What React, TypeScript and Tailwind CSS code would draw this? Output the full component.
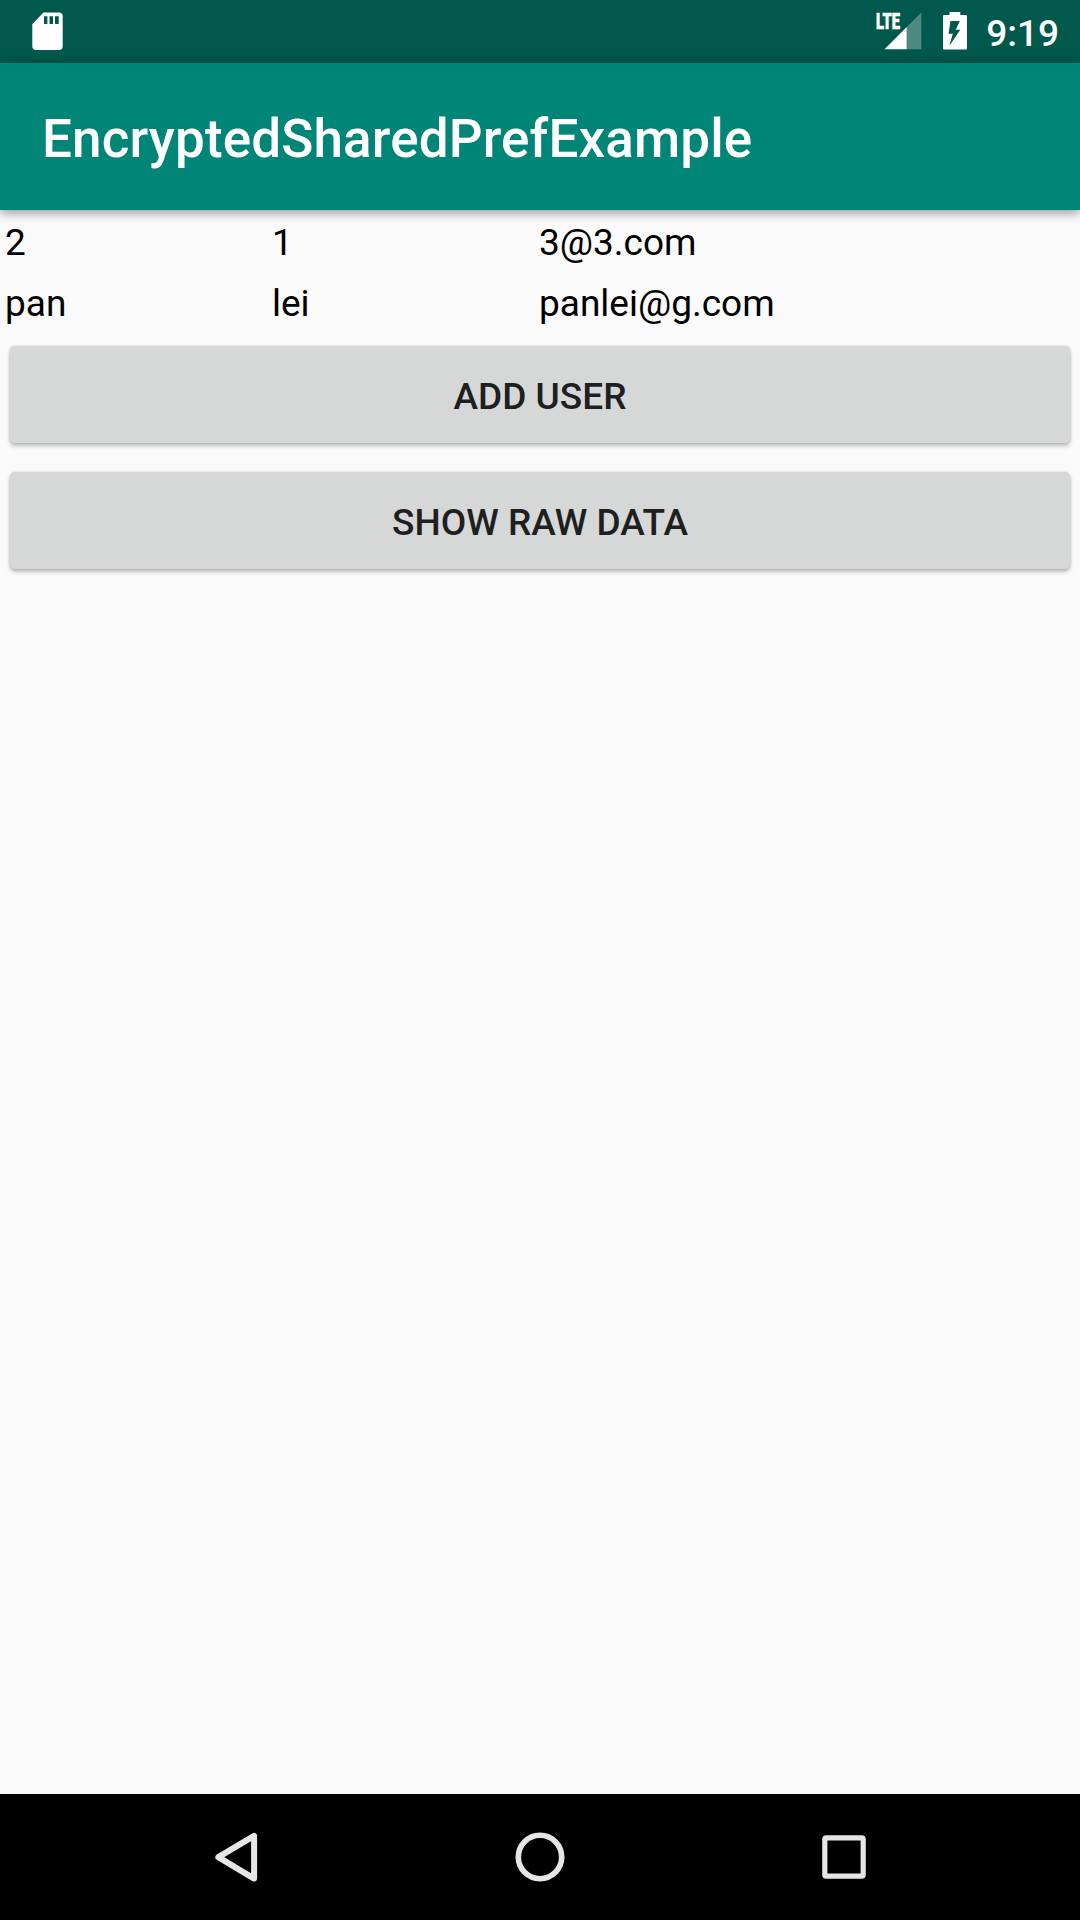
const users = [
  { first: "2", last: "1", email: "3@3.com" },
  { first: "pan", last: "lei", email: "panlei@g.com" },
];

function SdCardIcon() {
  return (
    <svg width="31" height="39" viewBox="0 0 31 39" className="block">
      <path
        fill="#fff"
        fillRule="evenodd"
        d="M11.5 0.5H27A3.7 3.7 0 0 1 30.7 4.2V34.3A3.7 3.7 0 0 1 27 38H4A3.7 3.7 0 0 1 0.3 34.3V12ZM12 4.2V12H15.4V4.2ZM17.5 4.2V12H21V4.2ZM23 4.2V12H26.7V4.2Z"
      />
    </svg>
  );
}

function SignalIcon() {
  return (
    <div className="relative h-[38px] w-[46px]">
      <svg width="46" height="38" viewBox="0 0 46 38" className="block">
        <path fill="#fff" fillOpacity="0.3" d="M30.7 15V37.3H45.3V0.5Z" />
        <path fill="#fff" d="M8.5 37.3L30.7 15V37.3Z" />
      </svg>
      <span className="absolute left-0 top-[-3px] origin-left scale-x-[0.65] text-[22.5px] font-black leading-[24px] text-white [-webkit-text-stroke:0.7px_#fff]">
        LTE
      </span>
    </div>
  );
}

function BatteryIcon() {
  return (
    <svg width="24" height="38" viewBox="0 0 24 38" className="block">
      <path
        fill="#fff"
        fillRule="evenodd"
        d="M6.5 0H17.3V3H22.8Q24 3 24 4.2V36.3Q24 37.5 22.8 37.5H1.2Q0 37.5 0 36.3V4.2Q0 3 1.2 3H6.5ZM7.5 9L5.5 21.7H9.8L6.3 34L17.3 17.7H12.8L16.7 9Z"
      />
    </svg>
  );
}

function RaisedButton({ label }: { label: string }) {
  return (
    <button className="h-[97px] w-full rounded-[5px] bg-[#d6d8d7] pt-[3px] text-[37px] font-medium leading-[43px] text-[#1e1f1f] shadow-[0_3px_4px_rgba(0,0,0,0.24),0_0_3px_rgba(0,0,0,0.14)]">
      {label}
    </button>
  );
}

export default function App() {
  return (
    <div className="flex h-[1920px] w-[1080px] flex-col overflow-hidden bg-[#fafafa] font-['Roboto',sans-serif]">
      <div className="flex h-[63px] shrink-0 items-start bg-[#00574b]">
        <div className="pl-8 pt-3">
          <SdCardIcon />
        </div>
        <div className="ml-auto flex items-start pr-[21px] pt-3">
          <SignalIcon />
          <div className="ml-[21px]">
            <BatteryIcon />
          </div>
          <span className="ml-[19px] text-[37px] font-medium leading-[43px] text-white">9:19</span>
        </div>
      </div>

      <header className="z-10 flex h-[147px] shrink-0 items-center bg-[#008577] px-[42px] shadow-[0_3px_10px_rgba(0,0,0,0.4)]">
        <h1 className="pt-1 text-[53px] font-medium leading-[62px] tracking-[0.14px] text-white">
          EncryptedSharedPrefExample
        </h1>
      </header>

      <main className="flex-1">
        <div className="pt-[2px]">
          {users.map((user) => (
            <div
              key={user.email}
              className="grid h-[61px] grid-cols-[267px_267px_1fr] items-center pl-[5px] text-[37px] leading-[43px] text-black"
            >
              <span>{user.first}</span>
              <span>{user.last}</span>
              <span>{user.email}</span>
            </div>
          ))}
        </div>
        <div className="flex flex-col gap-[29px] px-[10px] pt-3">
          <RaisedButton label="ADD USER" />
          <RaisedButton label="SHOW RAW DATA" />
        </div>
      </main>

      <nav className="flex h-[126px] shrink-0 items-center justify-center bg-black">
        <svg width="912" height="126" viewBox="84 0 912 126" fill="none" stroke="#e6e6e6">
          <path d="M254.1 41.8V84.6L218.3 63.2Z" strokeWidth="6" strokeLinejoin="round" />
          <circle cx="540" cy="63" r="21.7" strokeWidth="5.6" />
          <rect x="824.8" y="43.8" width="38.4" height="38.4" rx="1.5" strokeWidth="5.2" />
        </svg>
      </nav>
    </div>
  );
}
